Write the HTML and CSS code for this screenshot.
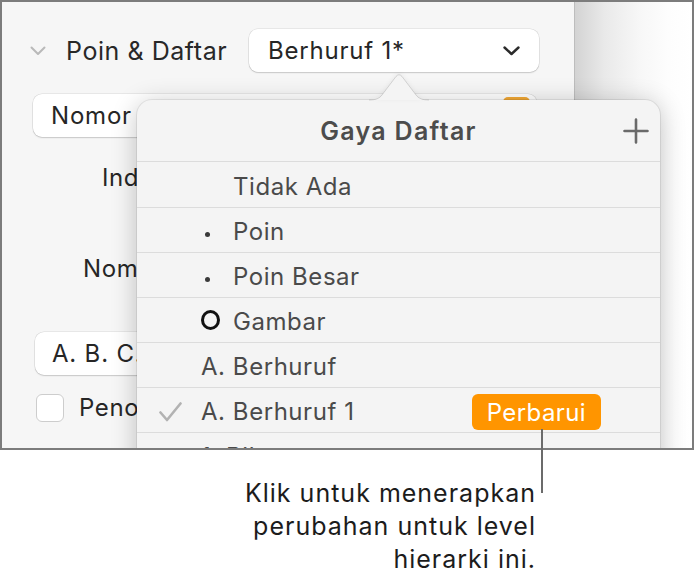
FILE: index.html
```html
<!DOCTYPE html>
<html lang="id">
<head>
<meta charset="utf-8">
<title>Gaya Daftar</title>
<link rel="stylesheet" href="styles.css">
</head>
<body>
<div class="page">
  <div class="frame">
    <div class="sidebar">
      <div class="sec-head">
        <svg class="disclosure" width="16" height="10" viewBox="0 0 16 10"><polyline points="1.5,1.5 8,8 14.5,1.5" fill="none" stroke="#b9b9b9" stroke-width="2" stroke-linecap="round" stroke-linejoin="round"/></svg>
        <span class="sec-title">Poin &amp; Daftar</span>
        <div class="select style-select">
          <span>Berhuruf 1*</span>
          <svg class="select-chev" width="17" height="10" viewBox="0 0 17 10"><polyline points="1.5,1.5 8.5,8 15.5,1.5" fill="none" stroke="#2b2b2b" stroke-width="2.4" stroke-linecap="round" stroke-linejoin="round"/></svg>
        </div>
      </div>
      <div class="select wide-select">
        <span>Nomor</span>
        <span class="well"></span>
      </div>
      <div class="field-label ind">Indentasi</div>
      <div class="field-label nom">Nomor</div>
      <div class="select wide-select abc">
        <span>A. B. C. D.</span>
      </div>
      <div class="check-row">
        <span class="checkbox"></span>
        <span>Penomoran</span>
      </div>
    </div>
    <div class="canvas"></div>

    <svg class="pop-arrow" width="60" height="28" viewBox="0 0 60 28">
      <path d="M0,27 C6,27 10,26 13,22 L27,3.5 Q30,0 33,3.5 L47,22 C50,26 54,27 60,27 Z" fill="#f4f4f4"/>
      <path d="M0,27 C6,27 10,26 13,22 L27,3.5 Q30,0 33,3.5 L47,22 C50,26 54,27 60,27" fill="none" stroke="rgba(0,0,0,0.13)" stroke-width="1"/>
    </svg>
    <div class="popover">
      <div class="pop-head">
        <span class="pop-title">Gaya Daftar</span>
        <svg class="plus" width="26" height="26" viewBox="0 0 26 26"><path d="M13 1.5V24.5M1.5 13H24.5" stroke="#6a6a6a" stroke-width="2.6" stroke-linecap="round"/></svg>
      </div>
      <div class="row first">
        <span class="chk"></span><span class="mark"></span><span class="lbl">Tidak Ada</span>
      </div>
      <div class="row">
        <span class="chk"></span><span class="mark"><span class="dot"></span></span><span class="lbl">Poin</span>
      </div>
      <div class="row">
        <span class="chk"></span><span class="mark"><span class="dot"></span></span><span class="lbl">Poin Besar</span>
      </div>
      <div class="row">
        <span class="chk"></span><span class="mark"><span class="ring"></span></span><span class="lbl">Gambar</span>
      </div>
      <div class="row">
        <span class="chk"></span><span class="lbl">A. Berhuruf</span>
      </div>
      <div class="row">
        <span class="chk"><svg width="23" height="20" viewBox="0 0 23 20"><polyline points="1.5,10.5 8,18 21.5,1.5" fill="none" stroke="#b2b2b2" stroke-width="2.6" stroke-linecap="round" stroke-linejoin="round"/></svg></span><span class="lbl">A. Berhuruf 1</span>
        <span class="update">Perbarui</span>
      </div>
      <div class="row">
        <span class="chk"></span><span class="lbl">1. Bilangan</span>
      </div>
    </div>
  </div>
  <div class="leader"></div>
  <p class="callout">Klik untuk menerapkan<br>perubahan untuk level<br>hierarki ini.</p>
</div>
</body>
</html>
```

FILE: styles.css
```css
* { box-sizing: border-box; }

html, body {
  margin: 0;
  padding: 0;
  background: #ffffff;
}

body {
  font-family: Inter, "Liberation Sans", sans-serif;
  color: #262626;
}

.page {
  position: relative;
  width: 694px;
  height: 588px;
}

.frame {
  position: relative;
  width: 694px;
  height: 450px;
  border: 2px solid #7c7c7c;
  display: flex;
  overflow: hidden;
}

.sidebar {
  width: 572px;
  flex: none;
  background: #f6f6f6;
  padding-top: 27px;
  display: flex;
  flex-direction: column;
}

.canvas {
  flex: 1;
  border-left: 1px solid #bdbdbd;
  background: linear-gradient(to right, #d3d3d3 0%, #e9e9e9 25%, #f7f7f7 55%, #fdfdfd 80%, #ffffff 100%);
}

.sec-head {
  display: flex;
  align-items: center;
  height: 43px;
  padding-left: 28px;
  padding-right: 35px;
}

.disclosure { flex: none; }

.sec-title {
  margin-left: 20px;
  font-size: 25px;
  color: #282828;
  letter-spacing: 0.55px;
}

.select {
  display: flex;
  align-items: center;
  height: 43px;
  background: #ffffff;
  border-radius: 9px;
  box-shadow: 0 0 0 0.5px rgba(0, 0, 0, 0.12), 0 1px 1.5px rgba(0, 0, 0, 0.14);
  font-size: 24px;
  letter-spacing: 0.8px;
  color: #262626;
}

.style-select {
  margin-left: auto;
  width: 290px;
  padding: 0 19px 0 19px;
  justify-content: space-between;
}

.select-chev { flex: none; }

.wide-select {
  margin: 22px 37px 0 31px;
  padding-left: 18px;
  padding-right: 7px;
}

.well {
  margin-left: auto;
  align-self: flex-start;
  margin-top: 3px;
  width: 27px;
  height: 37px;
  border-radius: 5px;
  background: #f3a935;
}

.field-label {
  font-size: 24px;
  line-height: 30px;
  height: 30px;
  letter-spacing: 0.6px;
  color: #262626;
}

.ind { margin-top: 26px; padding-left: 100px; }
.nom { margin-top: 61px; padding-left: 81px; }

.abc {
  margin-top: 48px;
  margin-left: 33px;
  padding-left: 17px;
}

.check-row {
  display: flex;
  align-items: center;
  margin-top: 18px;
  margin-left: 34px;
  height: 29px;
  font-size: 24px;
  letter-spacing: 0.6px;
  color: #262626;
}

.checkbox {
  width: 28px;
  height: 28px;
  border-radius: 6px;
  background: #ffffff;
  border: 1px solid #cdcdcd;
  margin-right: 15px;
  flex: none;
}

/* popover */
.pop-arrow {
  position: absolute;
  left: 367px;
  top: 71px;
  z-index: 3;
  filter: drop-shadow(0 -1px 2px rgba(0, 0, 0, 0.06));
}

.popover {
  position: absolute;
  left: 135px;
  top: 98px;
  width: 523px;
  height: 420px;
  background: #f4f4f4;
  border-radius: 15px;
  box-shadow: 0 0 0 1px rgba(0, 0, 0, 0.07), 0 4px 26px rgba(0, 0, 0, 0.24);
  z-index: 2;
  overflow: hidden;
}

.pop-head {
  height: 61px;
  display: grid;
  grid-template-columns: 1fr auto 1fr;
  align-items: center;
  padding-right: 11px;
}

.pop-title {
  grid-column: 2;
  font-size: 25px;
  font-weight: 600;
  letter-spacing: 1.3px;
  color: #4c4c4c;
  padding-left: 11px;
}

.plus {
  grid-column: 3;
  justify-self: end;
}

.row {
  display: flex;
  align-items: center;
  height: 45px;
  border-top: 1.5px solid #dcdcdc;
  padding-left: 22px;
  padding-top: 3px;
  font-size: 24px;
  letter-spacing: 0.55px;
  color: #4a4a4a;
}

.row.first { height: 46px; }

.chk {
  width: 42px;
  flex: none;
  display: flex;
  align-items: center;
}

.mark {
  width: 32px;
  flex: none;
  display: flex;
  align-items: center;
}

.dot {
  width: 5px;
  height: 5px;
  border-radius: 50%;
  background: #3a3a3a;
  margin-left: 4px;
  margin-top: 6px;
}

.ring {
  width: 19px;
  height: 20px;
  border-radius: 50%;
  border: 3px solid #111111;
  margin-top: -4px;
}

.update {
  margin-left: auto;
  margin-right: 59px;
  height: 36px;
  padding: 0 15px;
  display: flex;
  align-items: center;
  border-radius: 6px;
  background: #ff9500;
  color: #ffffff;
  font-size: 24px;
  letter-spacing: 0.4px;
  margin-top: 1px;
}

/* callout */
.leader {
  position: absolute;
  left: 541px;
  top: 429px;
  width: 2px;
  height: 64px;
  background: #6b6b6b;
  z-index: 4;
}

.callout {
  margin: 27px 0 0 0;
  padding-right: 158px;
  text-align: right;
  font-size: 25px;
  letter-spacing: 1px;
  line-height: 33px;
  color: #1c1c1c;
}
```
